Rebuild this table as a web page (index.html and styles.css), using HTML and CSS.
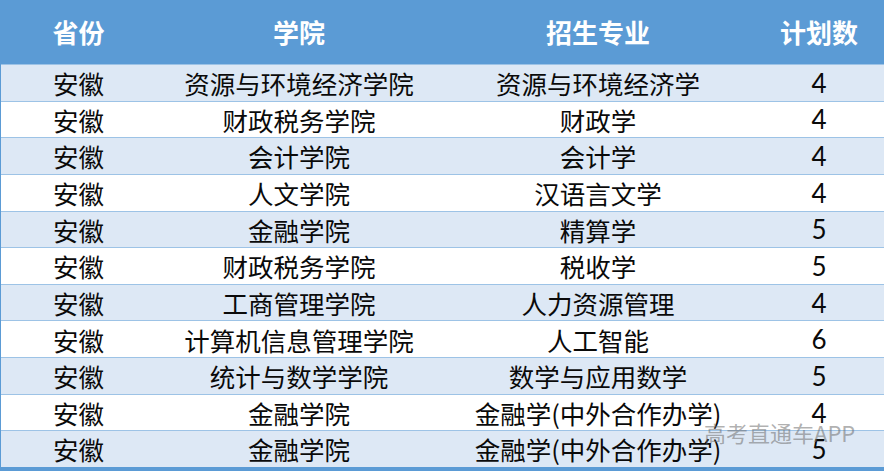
FILE: index.html
```html
<!DOCTYPE html>
<html lang="zh">
<head>
<meta charset="utf-8">
<link rel="stylesheet" href="styles.css">
</head>
<body>
<div class="sheet">
  <div class="row head">
    <div>省份</div><div>学院</div><div>招生专业</div><div>计划数</div>
  </div>
  <div class="row odd"><div>安徽</div><div>资源与环境经济学院</div><div>资源与环境经济学</div><div class="num">4</div></div>
  <div class="row"><div>安徽</div><div>财政税务学院</div><div>财政学</div><div class="num">4</div></div>
  <div class="row odd"><div>安徽</div><div>会计学院</div><div>会计学</div><div class="num">4</div></div>
  <div class="row"><div>安徽</div><div>人文学院</div><div>汉语言文学</div><div class="num">4</div></div>
  <div class="row odd"><div>安徽</div><div>金融学院</div><div>精算学</div><div class="num">5</div></div>
  <div class="row"><div>安徽</div><div>财政税务学院</div><div>税收学</div><div class="num">5</div></div>
  <div class="row odd"><div>安徽</div><div>工商管理学院</div><div>人力资源管理</div><div class="num">4</div></div>
  <div class="row"><div>安徽</div><div>计算机信息管理学院</div><div>人工智能</div><div class="num">6</div></div>
  <div class="row odd"><div>安徽</div><div>统计与数学学院</div><div>数学与应用数学</div><div class="num">5</div></div>
  <div class="row"><div>安徽</div><div>金融学院</div><div>金融学(中外合作办学)</div><div class="num">4</div></div>
  <div class="row odd"><div>安徽</div><div>金融学院</div><div>金融学(中外合作办学)</div><div class="num">5</div></div>
  <div class="watermark">高考直通车APP</div>
</div>
</body>
</html>
```
FILE: styles.css
```css
html, body {
  margin: 0;
  padding: 0;
  background: #ffffff;
}
.sheet {
  position: relative;
  width: 884px;
  height: 471px;
  overflow: hidden;
  display: flex;
  flex-direction: column;
  border-left: 1px solid #5b9bd5;
  border-bottom: 4px solid #5b9bd5;
  box-sizing: border-box;
  font-family: "Noto Sans CJK SC", "Noto Sans", sans-serif;
  color: #0a0a0a;
}
.row {
  display: grid;
  grid-template-columns: 155px 286px 312px 130px;
  flex: 1 1 0;
  align-items: center;
  text-align: center;
  font-size: 25.5px;
  font-weight: 400;
  line-height: 1;
  border-top: 1px solid #9dc3e6;
  background: #ffffff;
}
.row.odd {
  background: #dde8f5;
}
.row.head {
  flex: 0 0 63px;
  border-top: none;
  background: #5b9bd5;
  color: #ffffff;
  font-weight: 700;
  font-size: 26px;
  padding-bottom: 1px;
}
.num {
  font-family: "Lato", "Noto Sans", sans-serif;
  font-size: 26px;
  font-weight: 400;
}
.watermark {
  position: absolute;
  left: 703px;
  top: 421px;
  font-size: 22px;
  line-height: 1;
  color: rgba(110, 110, 110, 0.55);
  font-family: "Noto Sans CJK SC", "Noto Sans", sans-serif;
}
```
